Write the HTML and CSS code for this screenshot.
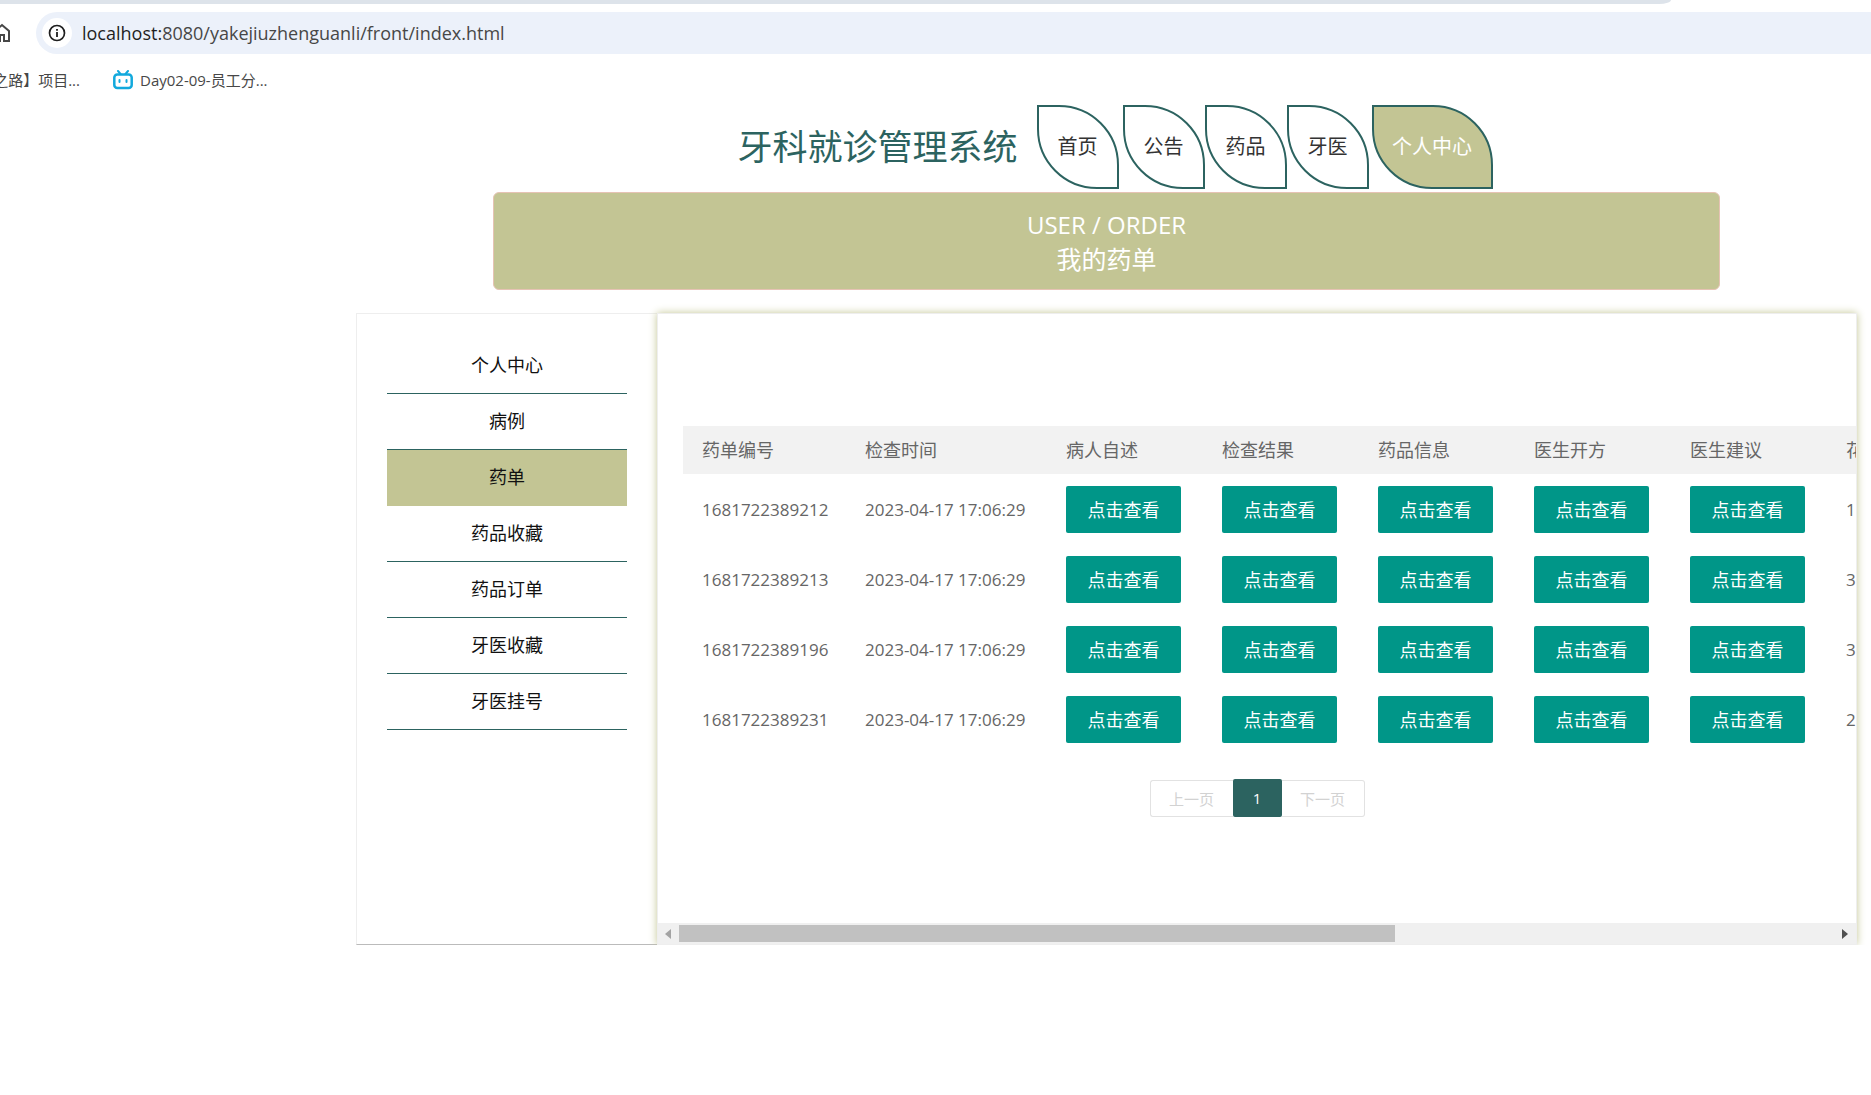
FILE: index.html
```html
<!DOCTYPE html>
<html lang="zh-CN">
<head>
<meta charset="utf-8">
<title>我的药单</title>
<link rel="stylesheet" href="styles.css">
</head>
<body>
<div class="browser">
  <div class="tabstrip"></div>
  <div class="toolbar">
    <svg class="home" width="20" height="22" viewBox="0 0 20 22" fill="none" stroke="#474747" stroke-width="2"><path d="M3 19V9l7-6 7 6v10h-5v-6H8v6z"/></svg>
    <div class="address">
      <span class="info"><svg width="18" height="18" viewBox="0 0 18 18"><circle cx="9" cy="9" r="7.500" fill="none" stroke="#1f1f1f" stroke-width="1.700"/><path d="M9 8v5M9 5v1.800" stroke="#1f1f1f" stroke-width="1.800"/></svg></span>
      <span class="url"><b>localhost:</b>8080/yakejiuzhenguanli/front/index.html</span>
    </div>
  </div>
  <div class="bookmarks">
    <a class="bookmark bookmark-cut" href="#">之路】项目...</a>
    <a class="bookmark" href="#"><svg width="20" height="20" viewBox="0 0 20 20" fill="none" stroke="#12a9dd" stroke-linecap="round"><rect x="1.300" y="4.500" width="17.400" height="13.500" rx="3" stroke-width="2.500"/><path d="M5 1l2.500 3M15 1l-2.500 3" stroke-width="2"/><path d="M6.500 10v2M13.500 10v2" stroke-width="2"/></svg>Day02-09-员工分...</a>
  </div>
</div>

<div class="page">
  <header class="header">
    <h1 class="site-title">牙科就诊管理系统</h1>
    <nav class="nav">
      <a class="leaf leaf-home" href="#">首页</a>
      <a class="leaf" href="#">公告</a>
      <a class="leaf" href="#">药品</a>
      <a class="leaf" href="#">牙医</a>
      <a class="leaf leaf-active" href="#">个人中心</a>
    </nav>
  </header>

  <section class="banner">
    <p>USER / ORDER</p>
    <h2>我的药单</h2>
  </section>

  <main class="main">
    <aside class="sidebar">
      <a href="#">个人中心</a>
      <a href="#">病例</a>
      <a class="active" href="#">药单</a>
      <a href="#">药品收藏</a>
      <a href="#">药品订单</a>
      <a href="#">牙医收藏</a>
      <a href="#">牙医挂号</a>
    </aside>

    <section class="panel">
      <div class="orders">
        <table>
          <colgroup><col class="col-id"><col class="col-time"><col class="col-view"><col class="col-view"><col class="col-view"><col class="col-view"><col class="col-view"><col class="col-cost"></colgroup>
          <thead>
            <tr><th>药单编号</th><th>检查时间</th><th>病人自述</th><th>检查结果</th><th>药品信息</th><th>医生开方</th><th>医生建议</th><th>花费</th></tr>
          </thead>
          <tbody>
            <tr><td>1681722389212</td><td>2023-04-17 17:06:29</td><td><button>点击查看</button></td><td><button>点击查看</button></td><td><button>点击查看</button></td><td><button>点击查看</button></td><td><button>点击查看</button></td><td>1</td></tr>
            <tr><td>1681722389213</td><td>2023-04-17 17:06:29</td><td><button>点击查看</button></td><td><button>点击查看</button></td><td><button>点击查看</button></td><td><button>点击查看</button></td><td><button>点击查看</button></td><td>3</td></tr>
            <tr><td>1681722389196</td><td>2023-04-17 17:06:29</td><td><button>点击查看</button></td><td><button>点击查看</button></td><td><button>点击查看</button></td><td><button>点击查看</button></td><td><button>点击查看</button></td><td>3</td></tr>
            <tr><td>1681722389231</td><td>2023-04-17 17:06:29</td><td><button>点击查看</button></td><td><button>点击查看</button></td><td><button>点击查看</button></td><td><button>点击查看</button></td><td><button>点击查看</button></td><td>2</td></tr>
          </tbody>
        </table>
      </div>
      <div class="pager">
        <button class="prev" disabled>上一页</button>
        <button class="current">1</button>
        <button class="next" disabled>下一页</button>
      </div>
      <div class="scrollbar">
        <svg width="6" height="10" viewBox="0 0 6 10"><path d="M6 0v10L0 5z" fill="#a3a3a3"/></svg>
        <div class="track"><div class="thumb"></div></div>
        <svg width="6" height="10" viewBox="0 0 6 10"><path d="M0 0v10l6-5z" fill="#505050"/></svg>
      </div>
    </section>
  </main>
</div>
</body>
</html>
```
FILE: styles.css
```css
* { box-sizing: border-box; }

body {
  margin: 0;
  background: #fff;
  color: #111;
  font-family: "Open Sans", "Noto Sans CJK SC", sans-serif;
  font-size: 18px;
  overflow-x: hidden;
}

a { color: inherit; text-decoration: none; }
button { font: inherit; border: 0; padding: 0; }
h1, h2, p { margin: 0; font-weight: inherit; }

/* browser window */
.tabstrip {
  width: calc(100% - 200px);
  height: 4px;
  background: #dde3ea;
  border-bottom-right-radius: 12px 4px;
}
.toolbar { display: flex; align-items: center; padding-top: 8px; }
.home { flex: none; margin: 0 24px 0 -8px; }
.address {
  flex: 1;
  display: flex;
  align-items: center;
  gap: 10px;
  height: 42px;
  padding-left: 6px;
  background: #ecf1fa;
  border-radius: 21px 0 0 21px;
}
.info {
  display: flex;
  align-items: center;
  justify-content: center;
  width: 30px;
  height: 30px;
  border-radius: 50%;
  background: #fff;
}
.url { color: #474747; font-size: 18px; }
.url b { color: #1f1f1f; font-weight: 400; }
.bookmarks {
  display: flex;
  gap: 33px;
  height: 51px;
  align-items: center;
  color: #474747;
  font-size: 15px;
}
.bookmark { display: flex; align-items: center; gap: 7px; white-space: nowrap; }
.bookmark-cut { width: 80px; justify-content: flex-end; overflow: hidden; }

/* site */
.page { padding: 0 14px 0 356px; }
.header {
  display: flex;
  align-items: center;
  justify-content: center;
  gap: 19px;
  padding-left: 17px;
}
.site-title { color: #2c6360; font-size: 35px; font-weight: 400; line-height: 84px; }
.nav { display: flex; }
.leaf {
  width: 82px;
  border: 2px solid #2c6360;
  border-radius: 0 60px;
  color: #333;
  font-size: 20px;
  line-height: 80px;
  text-align: center;
}
.leaf-home { margin-right: 4px; }
.leaf-active { width: 121px; margin-left: 3px; background: #c3c594; color: #fff; }

.banner {
  margin: 3px 137px 24px;
  padding: 14px 0 12px;
  border: 1px solid #e6c3b4;
  border-radius: 6px;
  background: #c3c594;
  color: #fff;
  font-size: 24px;
  line-height: 35px;
  text-align: center;
}
.banner h2 { font-size: 25px; }

.main { display: flex; min-height: 632px; }
.banner + .main { margin-top: -1px; }
.sidebar {
  flex: none;
  width: 301px;
  padding: 24px 30px;
  border: 1px solid #eee;
  border-right: 0;
  border-bottom-color: #bbb;
  text-align: center;
}
.sidebar a { display: block; border-bottom: 1px solid #2c6360; line-height: 55px; }
.sidebar .active { background: #c3c594; border-bottom-color: #c3c594; }

.panel {
  flex: 1;
  min-width: 0;
  display: flex;
  flex-direction: column;
  padding-top: 112px;
  border: 1px solid #eee;
  box-shadow: 0 0 8px #c3c594;
  color: #666;
}
.orders { margin-left: 25px; overflow: hidden; }
table { width: 1900px; border-collapse: collapse; table-layout: fixed; }
.col-id { width: 163px; }
.col-time { width: 201px; }
.col-view { width: 156px; }
th, td { padding: 0 19px; text-align: left; font-weight: 400; white-space: nowrap; }
th { height: 48px; background: #f2f2f2; line-height: 24px; }
td { height: 70px; font-size: 17px; }
td button {
  display: block;
  width: 115px;
  height: 47px;
  border-radius: 2px;
  background: #009688;
  color: #fff;
  font-size: 18px;
}

.pager { display: flex; justify-content: center; align-items: flex-end; margin-top: 25px; font-size: 15px; }
.pager button { height: 37px; }
.prev, .next { width: 83px; border: 1px solid #e2e2e2; background: #fff; color: #d2d2d2; }
.prev { border-right: 0; border-radius: 3px 0 0 3px; }
.next { border-left: 0; border-radius: 0 3px 3px 0; }
.pager .current { width: 49px; height: 38px; border-radius: 2px; background: #2c6360; color: #fff; }

.scrollbar {
  display: flex;
  align-items: center;
  gap: 8px;
  height: 21px;
  margin-top: auto;
  padding: 0 8px 0 7px;
  background: #f0f0f0;
}
.track { flex: 1; }
.thumb { width: 62%; height: 17px; background: #c1c1c1; }
```
